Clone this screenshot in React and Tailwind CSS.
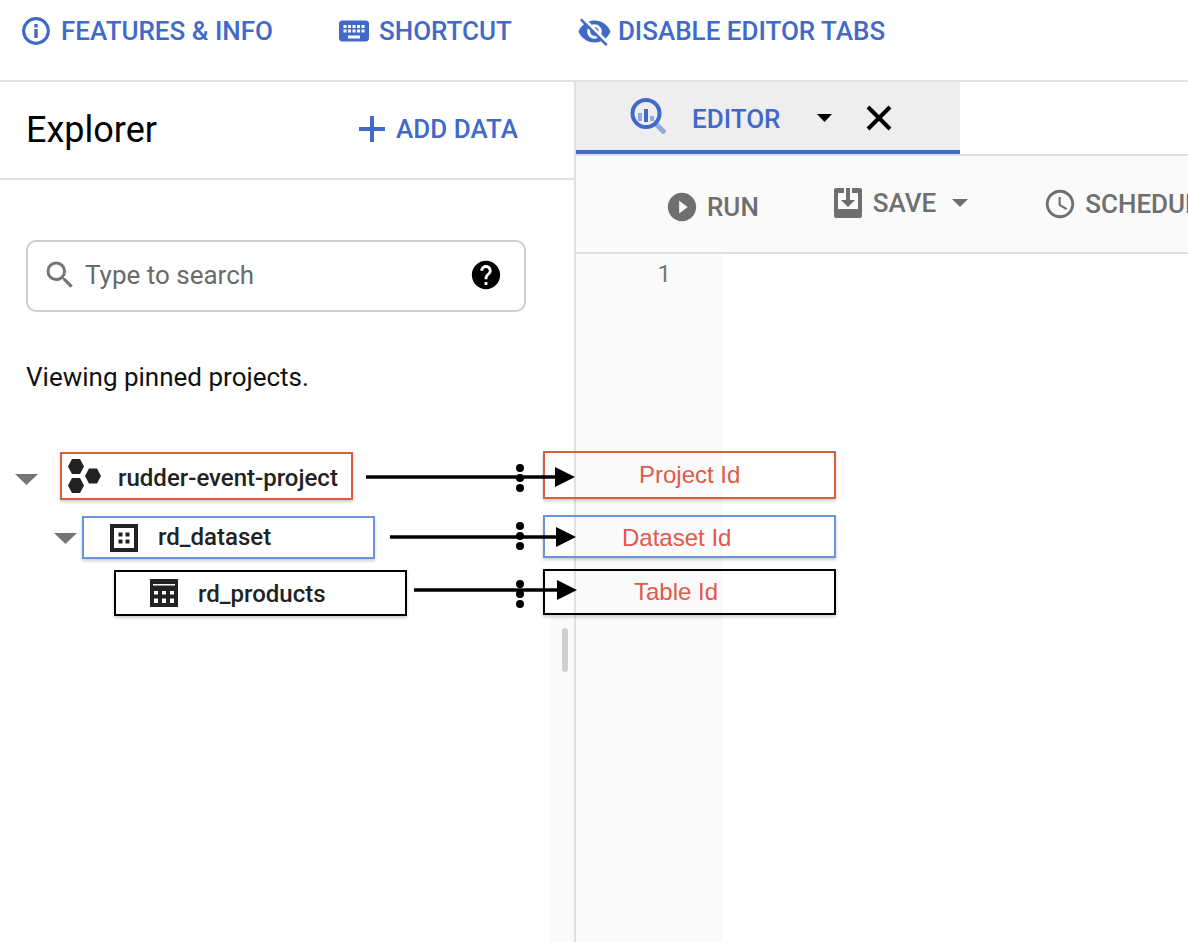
import React from "react";
import {
  MdKeyboard,
  MdVisibilityOff,
  MdSearch,
  MdHelp,
  MdPlayCircleFilled,
  MdSchedule,
} from "react-icons/md";

function Caret({ className }) {
  return (
    <svg viewBox="0 0 20 10" className={className} preserveAspectRatio="none">
      <path d="M0 0h20L10 10z" fill="currentColor" />
    </svg>
  );
}

function InfoIcon() {
  return (
    <svg viewBox="0 0 28 28" className="w-[28px] h-[28px]">
      <circle cx="14" cy="14" r="12.300" fill="none" stroke="currentColor" strokeWidth="3.200" />
      <path d="M12.300 12h3.400v9h-3.400zM12.300 7h3.400v3.400h-3.400z" fill="currentColor" />
    </svg>
  );
}

function HexIcon() {
  return (
    <svg viewBox="0 0 34 34" className="w-[34px] h-[34px] text-[#222]">
      <path fill="currentColor" d="M5 0h8l4 7.500-4 7.500H5L1 7.500z" />
      <path fill="currentColor" d="M5 19h8l4 7.500-4 7.500H5l-4-7.500z" />
      <path fill="currentColor" d="M22 9.500h8l4 7.500-4 7.500h-8l-4-7.500z" />
    </svg>
  );
}

function DatasetIcon() {
  return (
    <svg viewBox="0 0 28 28" className="w-[28px] h-[28px] text-[#222]">
      <path fill="currentColor" fillRule="evenodd" d="M0 0h28v28H0zM4 4v20h20V4z" />
      <path fill="currentColor" d="M8.500 8.500h4v4h-4zM15.500 8.500h4v4h-4zM8.500 15.500h4v4h-4zM15.500 15.500h4v4h-4z" />
    </svg>
  );
}

function TableIcon() {
  return (
    <svg viewBox="0 0 28 28" className="w-[28px] h-[28px] text-[#222]">
      <path
        fill="currentColor"
        fillRule="evenodd"
        d="M0 0h28v28H0zM4 12v3.500h4V12zM12 12v3.500h4V12zM20 12v3.500h4V12zM4 19.500V24h4v-4.500zM12 19.500V24h4v-4.500zM20 19.500V24h4v-4.500z"
      />
      <path fill="#fff" d="M3 5h22v1.500H3z" />
    </svg>
  );
}

function EditorIcon() {
  return (
    <svg viewBox="0 0 36 36" className="w-[36px] h-[36px]">
      <path d="M25 25l10 10" stroke="#8fa8de" strokeWidth="5" fill="none" />
      <circle cx="16" cy="15.500" r="13.500" fill="none" stroke="#4169c9" strokeWidth="4" />
      <path d="M8 15h4v8H8z" fill="#8fa8de" />
      <path d="M14 11h4v13h-4z" fill="#4169c9" />
      <path d="M20 18h4v5h-4z" fill="#8fa8de" />
    </svg>
  );
}

function SaveIcon() {
  return (
    <svg viewBox="0 0 28 30" className="w-[28px] h-[30px] text-[#6f6f6f]">
      <path
        fill="currentColor"
        fillRule="evenodd"
        d="M2 0h24a2 2 0 0 1 2 2v26a2 2 0 0 1-2 2H2a2 2 0 0 1-2-2V2a2 2 0 0 1 2-2zM4 5v16h20V5h-6V0h-8v5z"
      />
      <path fill="currentColor" d="M12 0h4v12h5l-7 7-7-7h5z" />
    </svg>
  );
}

const treeRows = [
  { label: "rudder-event-project", icon: HexIcon, box: "ml-[60px] h-[48px] border-[#d9603f] pl-[5px] gap-[17px]", caret: "left-[-47px] top-[20px]", text: "mt-[4px]" },
  { label: "rd_dataset", icon: DatasetIcon, box: "ml-[82px] mt-[16px] h-[43px] border-[#6b94dd] pl-[26px] gap-[20px]", caret: "left-[-30px] top-[15px]", text: "-mt-[2px]" },
  { label: "rd_products", icon: TableIcon, box: "ml-[114px] mt-[11px] h-[46px] border-black pl-[34px] gap-[20px]", text: "mt-[2px]" },
];

const idBoxes = [
  { label: "Project Id", box: "top-[451px] h-[48px] border-[#d9603f]", text: "left-[94px] top-[8px]" },
  { label: "Dataset Id", box: "top-[515px] h-[43px] border-[#6b94dd]", text: "left-[77px] top-[7px]" },
  { label: "Table Id", box: "top-[569px] h-[46px] border-black", text: "left-[89px] top-[7px]" },
];

const arrows = [
  { x1: 366, x2: 556, y: 477, head: "M555 467l20 10-20 10z", dots: [468, 478, 488] },
  { x1: 390, x2: 557, y: 537, head: "M556 527l20 10-20 10z", dots: [526, 536, 546] },
  { x1: 414, x2: 558, y: 590, head: "M557 580l20 10-20 10z", dots: [584, 594, 604] },
];

export default function App() {
  return (
    <div className="relative w-[1188px] h-[942px] overflow-hidden bg-white font-['Roboto',sans-serif]">
      {/* top actions */}
      <div className="h-[82px] border-b-2 border-[#e0e0e0] flex items-center pb-[18px] pl-[22px] text-[#4169c9] text-[26px] font-medium whitespace-nowrap">
        <InfoIcon />
        <span className="ml-[11px] leading-none">FEATURES &amp; INFO</span>
        <MdKeyboard className="ml-[63px] w-[36px] h-[36px]" />
        <span className="ml-[7px] leading-none">SHORTCUT</span>
        <MdVisibilityOff className="ml-[65px] w-[35px] h-[35px]" />
        <span className="ml-[6px] leading-none">DISABLE EDITOR TABS</span>
      </div>

      <div className="flex h-[860px]">
        {/* explorer */}
        <div className="relative w-[576px] shrink-0 border-r-2 border-[#e0e0e0]">
          <div className="absolute right-0 top-[534px] bottom-0 w-[24px] bg-[#fafafa]" />
          <div className="absolute left-[562px] top-[546px] w-[6px] h-[44px] rounded-sm bg-[#cfcfcf]" />
          <div className="relative h-[98px] border-b-2 border-[#e0e0e0] flex items-center justify-between pl-[26px] pr-[56px]">
            <span className="text-[36px] leading-none text-black">Explorer</span>
            <div className="flex items-center gap-[11px] text-[#4169c9] -mt-[2px]">
              <svg viewBox="0 0 26 26" className="w-[26px] h-[26px]">
                <path d="M11 0h4v11h11v4H15v11h-4V15H0v-4h11z" fill="currentColor" />
              </svg>
              <span className="text-[26px] leading-none font-medium">ADD DATA</span>
            </div>
          </div>
          <div className="relative mt-[60px] ml-[26px] w-[500px] h-[72px] rounded-[10px] border-2 border-[#cfcfcf] flex items-center pl-[14px] pr-[21px]">
            <MdSearch className="w-[36px] h-[36px] text-[#757575] -mt-[2px]" />
            <span className="ml-[7px] -mt-[2px] text-[26px] text-[#6a6a6a] leading-none">Type to search</span>
            <MdHelp className="ml-auto w-[34px] h-[34px] text-black -mt-[2px]" />
          </div>
          <div className="relative mt-[49px] ml-[26px] text-[26px] leading-[32px] text-[#111]">Viewing pinned projects.</div>
          <div className="relative mt-[59px]">
            {treeRows.map((row) => (
              <div key={row.label} className={`relative w-[293px] border-2 flex items-center shadow-[0_2px_3px_rgba(0,0,0,0.2)] ${row.box}`}>
                {row.caret && <Caret className={`absolute w-[23px] h-[11px] text-[#757575] ${row.caret}`} />}
                {React.createElement(row.icon)}
                <span className={`text-[24px] leading-none font-medium text-[#222] ${row.text}`}>{row.label}</span>
              </div>
            ))}
          </div>
        </div>

        {/* editor */}
        <div className="flex-1 flex flex-col min-w-0">
          <div className="h-[74px] border-b-2 border-[#e0e0e0] flex items-start">
            <div className="w-[384px] h-[72px] bg-[#eeeeee] border-b-4 border-[#4169c9] flex items-center text-[#4169c9] pl-[54px]">
              <EditorIcon />
              <span className="ml-[26px] text-[26px] leading-none font-medium mt-[6px]">EDITOR</span>
              <Caret className="ml-[37px] w-[15px] h-[8px] text-black mt-[3px]" />
              <svg viewBox="0 0 26 26" className="ml-[34px] w-[26px] h-[26px] mt-[4px]">
                <path d="M2 2l22 22M24 2L2 24" stroke="#000" strokeWidth="4" fill="none" />
              </svg>
            </div>
          </div>
          <div className="h-[98px] shrink-0 border-b-2 border-[#e0e0e0] bg-[#fafafa] flex items-center whitespace-nowrap overflow-hidden text-[#6f6f6f] pl-[89px] text-[26px] font-medium">
            <div className="flex items-center gap-[8px] mt-[5px]">
              <MdPlayCircleFilled className="w-[34px] h-[34px]" />
              <span className="leading-none">RUN</span>
            </div>
            <div className="ml-[75px] flex items-center -mt-[2px]">
              <SaveIcon />
              <span className="ml-[11px] leading-none">SAVE</span>
              <Caret className="ml-[16px] w-[16px] h-[8px]" />
            </div>
            <div className="ml-[75px] flex items-center gap-[8px]">
              <MdSchedule className="w-[34px] h-[34px]" />
              <span className="leading-none">SCHEDULE</span>
            </div>
          </div>
          <div className="flex-1 flex">
            <div className="w-[147px] bg-[#fafafa] flex justify-end pr-[52px] pt-[5px]">
              <span className="text-[24px] leading-[30px] text-[#757575]">1</span>
            </div>
          </div>
        </div>
      </div>

      {/* annotations drawn on the screenshot */}
      {idBoxes.map((b) => (
        <div key={b.label} className={`absolute left-[543px] w-[293px] border-2 shadow-[0_2px_3px_rgba(0,0,0,0.2)] ${b.box}`}>
          <span className={`absolute text-[24px] leading-[28px] text-[#e2584a] font-['Liberation_Sans',sans-serif] ${b.text}`}>{b.label}</span>
        </div>
      ))}
      <svg className="absolute left-0 top-0 w-[1188px] h-[942px] pointer-events-none" viewBox="0 0 1188 942">
        {arrows.map((a) => (
          <g key={a.y}>
            {a.dots.map((d) => (
              <circle key={d} cx="520" cy={d} r="4" fill="#000" />
            ))}
            <path d={`M${a.x1} ${a.y}H${a.x2}`} stroke="#000" strokeWidth="3.500" />
            <path d={a.head} fill="#000" />
          </g>
        ))}
      </svg>
    </div>
  );
}
